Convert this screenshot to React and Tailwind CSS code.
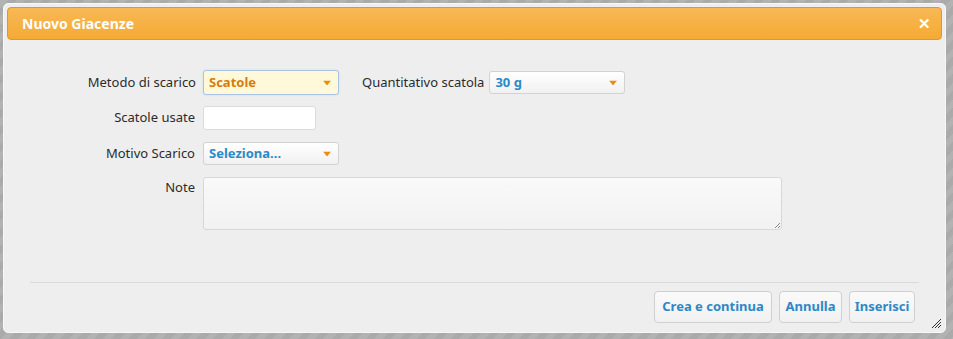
const font = { fontFamily: '"Noto Sans", "Open Sans", Arial, sans-serif' }

function Arrow() {
  return (
    <svg width="8" height="5" viewBox="0 0 8 5" className="absolute right-[7px] top-1/2 -translate-y-1/2">
      <path d="M0 0 L8 0 L4 5 Z" fill="#f08a0c" />
    </svg>
  )
}

function Select({ value, focused, width = "w-[136px]", h = "h-[23px]" }) {
  return (
    <div
      className={`relative ${width} ${h} rounded-[3px] border flex items-center pl-[5px] text-[13px] font-bold ${
        focused
          ? "border-[#a9c3e8] bg-[#fff8d9] text-[#d67c0c] shadow-[0_0_2px_#c9dbf2]"
          : "border-[#d2d2d2] bg-gradient-to-b from-white to-[#f1f1f1] text-[#2a8ac8]"
      }`}
    >
      {value}
      <Arrow />
    </div>
  )
}

function Label({ children, className = "" }) {
  return (
    <div className={`w-[191px] text-right text-[13px] text-[#2b2b2b] ${className}`}>{children}</div>
  )
}

function Button({ children, width }) {
  return (
    <button className={`${width} h-[32px] rounded-[4px] border border-[#d0d0d0] bg-gradient-to-b from-[#fafafa] to-[#f1f1f1] text-[13px] font-bold text-[#2c88c6]`}>
      {children}
    </button>
  )
}

export default function App() {
  return (
    <div
      style={font}
      className="w-[953px] h-[339px] pt-[3px] pl-[3px] bg-[repeating-linear-gradient(135deg,#b2b2b2_0px,#b2b2b2_6px,#aaaaaa_6px,#aaaaaa_12px)]"
    >
      <div className="w-[943px] h-[330px] rounded-[5px] border border-[#f7f7f7] bg-[#eeeeee] p-[3px] relative flex flex-col">
        {/* header */}
        <div className="h-[33px] rounded-[4px] border border-[#e2952a] bg-gradient-to-b from-[#f8b855] to-[#f5aa32] flex items-center justify-between pl-[14px] pr-[10px] text-white">
          <span className="text-[14px] font-bold">Nuovo Giacenze</span>
          <span className="text-[15px] font-bold leading-none">✕</span>
        </div>

        {/* body */}
        <div className="flex flex-col pt-[30px] -ml-[3px]">
          <div className="flex items-center h-[25px]">
            <Label className="pr-[1px] w-[193px]">Metodo di scarico</Label>
            <div className="ml-[6px]">
              <Select value="Scatole" focused h="h-[25px]" />
            </div>
            <div className="ml-[23px] text-[13px] text-[#2b2b2b]">Quantitativo scatola</div>
            <div className="ml-[5px]">
              <Select value="30 g" />
            </div>
          </div>

          <div className="flex items-center mt-[11px]">
            <Label>Scatole usate</Label>
            <div className="ml-[8px] w-[113px] h-[24px] rounded-[3px] border border-[#dcdcdc] bg-white" />
          </div>

          <div className="flex items-center mt-[12px]">
            <Label>Motivo Scarico</Label>
            <div className="ml-[8px]">
              <Select value="Seleziona..." />
            </div>
          </div>

          <div className="flex items-start mt-[12px]">
            <Label className="pt-[1px]">Note</Label>
            <div className="ml-[8px] w-[579px] h-[53px] rounded-[3px] border border-[#d8d8d8] bg-gradient-to-b from-[#f9f9f9] to-[#f2f2f2] relative">
              <svg width="6" height="6" viewBox="0 0 6 6" className="absolute right-[1px] bottom-[1px]">
                <path d="M6 1 L1 6 M6 4 L4 6" stroke="#888" strokeWidth="1" />
              </svg>
            </div>
          </div>
        </div>

        {/* footer */}
        <div className="mt-auto mb-[6px] mx-[23px] border-t border-[#dadada] pt-[8px] flex justify-end gap-[7px] pr-[4px]">
          <Button width="w-[118px]">Crea e continua</Button>
          <Button width="w-[63px]">Annulla</Button>
          <Button width="w-[66px]">Inserisci</Button>
        </div>

        <svg width="11" height="11" viewBox="0 0 11 11" className="absolute right-[3px] bottom-[3px]">
          <path d="M10 1 L1 10 M10 4 L4 10 M10 7 L7 10" stroke="#333" strokeWidth="1" />
        </svg>
      </div>
    </div>
  )
}
